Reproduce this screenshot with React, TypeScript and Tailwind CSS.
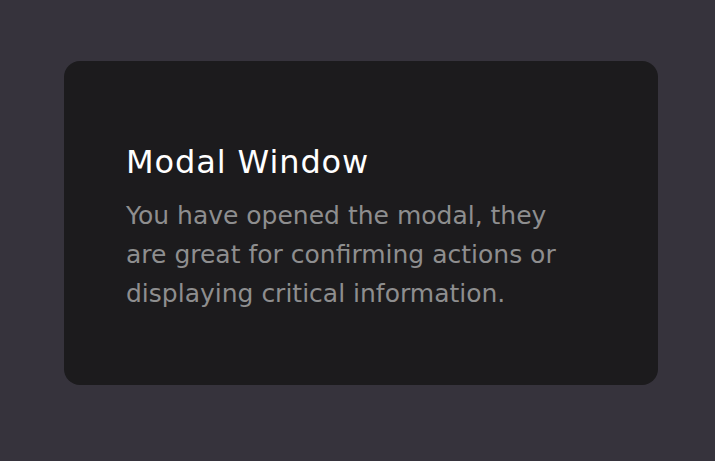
export default function App() {
  return (
    <div className="h-[461px] w-full bg-[#36333c] pt-[61px] pl-[64px] font-['DejaVu_Sans',sans-serif]">
      <div className="h-[324px] w-[594px] rounded-2xl bg-[#1c1b1d] pl-[62px] pt-[79px]">
        <h2 className="text-[32px] leading-[44px] font-normal tracking-[0.9px] text-white">Modal Window</h2>
        <p className="mt-[12px] text-[25px] leading-[39px] text-[#8e8e8f]">
          You have opened the modal, they
          <br />
          are great for confirming actions or
          <br />
          displaying critical information.
        </p>
      </div>
    </div>
  );
}
